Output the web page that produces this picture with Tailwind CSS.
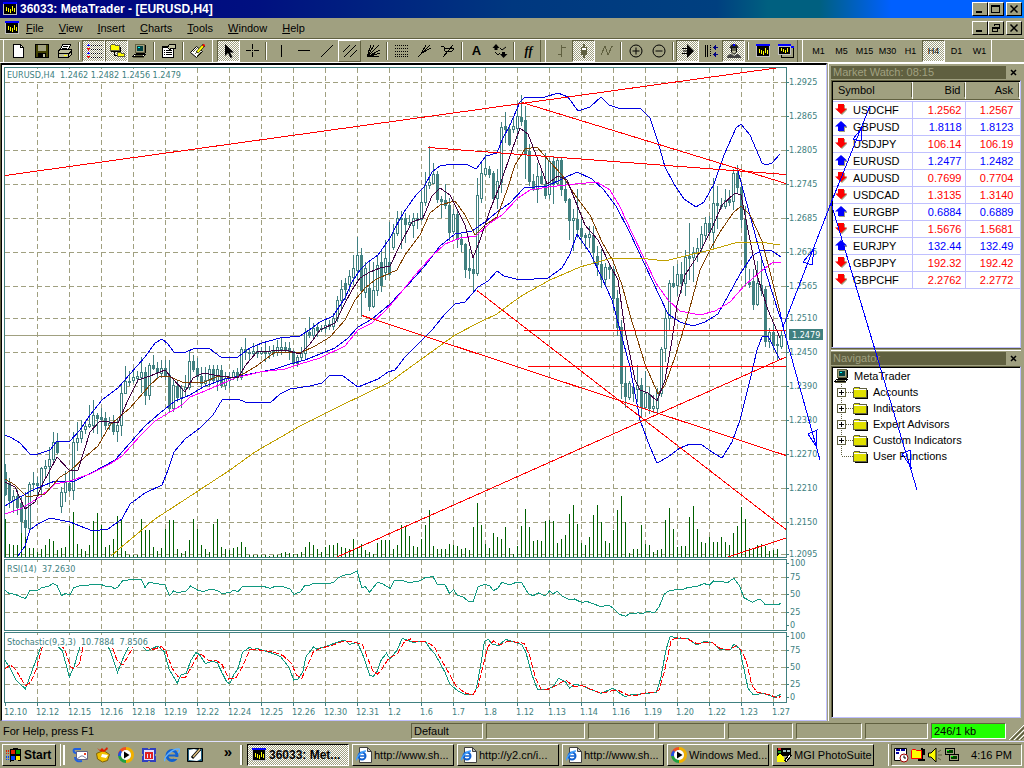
<!DOCTYPE html>
<html lang="en">

<head>
    <meta charset="UTF-8" />
    <meta name="viewport" content="width=device-width, initial-scale=1.0" />
    <title>36033: MetaTrader - [EURUSD,H4]</title>
    <script src="https://cdn.jsdelivr.net/npm/@tailwindcss/browser@4"></script>
</head>

<body class="relative flex h-screen flex-col overflow-hidden bg-[#a0a080] font-['Liberation_Sans',Arial,sans-serif] text-[11px] leading-[14px] text-black select-none">

    <!-- Shared symbols -->
    <svg class="hidden">
        <symbol id="app" viewBox="0 0 16 16" shape-rendering="crispEdges">
            <path fill="#000" d="M1 2h14v12H1z" />
            <path fill="#00f" d="M1 1h14v2H1z" />
            <path fill="none" stroke="#c0c0c0" d="M1.500 3v10.500h13V3" />
            <path fill="#ff0" d="M4 6h1v4H4zM6 7h1v4H6zM8 8h1v4H8zM10 5h1v5h-1zM12 7h1v4h-1z" />
        </symbol>
        <symbol id="folder" viewBox="0 0 16 16" shape-rendering="crispEdges">
            <path fill="#000" d="M3 14h12V6h1v9H3z" />
            <path fill="#e0e000" stroke="#606040" d="M1.500 13.500v-9l1-1.500h4l1.500 1.500h6.500v9z" />
            <path stroke="#fff" d="M2 5.500h12" />
        </symbol>
        <symbol id="pc" viewBox="0 0 16 16" shape-rendering="crispEdges">
            <path fill="#a0a080" stroke="#606040" d="M3.500 1.500h9v8h-9z" />
            <path fill="#004040" d="M5 3h6v5H5z" />
            <path fill="#0ff" d="M6 4h2v1H6z" />
            <path fill="#000" d="M13 2h1v8h-1zM4 10h9v1H4z" />
            <path fill="#fff" stroke="#000" d="M2.500 11.500h11l-2 2h-11z" />
            <path stroke="#606040" d="M3 12.500h8M1 14.500h11" />
        </symbol>
        <symbol id="ie" viewBox="0 0 16 16">
            <circle cx="8" cy="8.500" r="5" fill="none" stroke="#1060d0" stroke-width="3" />
            <path d="M4 8.500h9" stroke="#1060d0" stroke-width="2" />
            <path d="M10 10h5v2h-5z" fill="#a0a080" />
            <path d="M1 14C-1 11 8 1 15 2c1 1 0 3-1 4" fill="none" stroke="#60b0ff" stroke-width="1.500" />
        </symbol>
        <symbol id="iepage" viewBox="0 0 16 16">
            <path fill="#fff" stroke="#404040" d="M3.500.5h8l4 4v11h-12z" />
            <path fill="#c0c0c0" stroke="#404040" d="M11.500.5v4h4z" />
            <circle cx="6" cy="9" r="3.500" fill="none" stroke="#1060d0" stroke-width="2" />
            <path d="M3 9h7" stroke="#1060d0" stroke-width="1.500" />
            <path d="M1 13c-2-1 4-9 9-9" fill="none" stroke="#40a0ff" stroke-width="1.500" />
        </symbol>
        <symbol id="wmp" viewBox="0 0 16 16">
            <path d="M8 1.500A6.500 6.500 0 0 1 14.500 8" fill="none" stroke="#f0b000" stroke-width="3" />
            <path d="M14.500 8A6.500 6.500 0 0 1 8 14.500" fill="none" stroke="#f0b000" stroke-width="3" />
            <path d="M8 14.500A6.500 6.500 0 0 1 1.500 8" fill="none" stroke="#20a040" stroke-width="3" />
            <path d="M1.500 8A6.500 6.500 0 0 1 8 1.500" fill="none" stroke="#f05020" stroke-width="3" />
            <path d="M1.500 9c0-2 1-4 2-4.500" fill="none" stroke="#2050e0" stroke-width="3" />
            <circle cx="8" cy="8" r="5" fill="#fff" />
            <path d="M6 4.500v7L11.500 8z" fill="#000" />
        </symbol>
    </svg>

    <!-- Title bar -->
    <header class="flex h-[18px] shrink-0 items-center bg-[linear-gradient(90deg,#000080_0%,#001080_25%,#003880_50%,#004080_70%,#006080_75%,#006080_80%,#0060ff_87%,#0060ff_98%,#0080ff_100%)] pr-[2px] pl-[2px] text-white">
        <svg class="mr-[2px] h-4 w-4"><use href="#app" /></svg>
        <h1 class="flex-1 text-[12px] font-bold">36033: MetaTrader - [EURUSD,H4]</h1>
        <div class="flex [&>button]:h-[14px] [&>button]:w-4 [&>button]:border [&>button]:border-t-white [&>button]:border-r-black [&>button]:border-b-black [&>button]:border-l-white [&>button]:bg-[#a0a080]">
            <button aria-label="Minimize"><svg viewBox="0 0 14 12" shape-rendering="crispEdges"><path fill="#000" d="M3 8h6v2H3z" /></svg></button>
            <button aria-label="Maximize"><svg viewBox="0 0 14 12" shape-rendering="crispEdges"><path d="M2 2h9v8H2zM3 4v5h7V4z" fill="#000" fill-rule="evenodd" /></svg></button>
            <button aria-label="Close" class="ml-[2px]"><svg viewBox="0 0 14 12"><path d="M3.500 2.500l7 7M10.500 2.500l-7 7" stroke="#000" stroke-width="1.500" /></svg></button>
        </div>
    </header>

    <!-- Menu -->
    <nav class="flex h-[21px] shrink-0 items-center border-b border-[#606040] pr-[2px] pl-1">
        <svg class="mr-[6px] h-4 w-4"><use href="#app" /></svg>
        <div class="flex flex-1 gap-[15px]">
            <button><u>F</u>ile</button>
            <button><u>V</u>iew</button>
            <button><u>I</u>nsert</button>
            <button><u>C</u>harts</button>
            <button><u>T</u>ools</button>
            <button><u>W</u>indow</button>
            <button><u>H</u>elp</button>
        </div>
        <div class="flex [&>button]:h-[14px] [&>button]:w-4 [&>button]:border [&>button]:border-t-white [&>button]:border-r-black [&>button]:border-b-black [&>button]:border-l-white [&>button]:bg-[#a0a080]">
            <button aria-label="Minimize chart"><svg viewBox="0 0 14 12" shape-rendering="crispEdges"><path fill="#000" d="M3 8h6v2H3z" /></svg></button>
            <button aria-label="Restore chart"><svg viewBox="0 0 14 12" shape-rendering="crispEdges"><path fill="none" stroke="#000" d="M5.500 4V2.500h5v4H9M5 2h6M3.500 5.500h5v4h-5zM3 5h6v1H3z" /></svg></button>
            <button aria-label="Close chart" class="ml-[2px]"><svg viewBox="0 0 14 12"><path d="M3.500 2.500l7 7M10.500 2.500l-7 7" stroke="#000" stroke-width="1.500" /></svg></button>
        </div>
    </nav>

    <!-- Toolbars -->
    <div class="flex h-6 shrink-0 border-t border-b border-t-white border-b-white pl-[3px] [&_button]:grid [&_button]:h-[22px] [&_button]:w-[23px] [&_button]:place-items-center [&_i]:mx-[2px] [&_i]:h-[18px] [&_i]:w-[2px] [&_i]:border-l [&_i]:border-[#606040] [&_i]:bg-white [&_svg]:h-4 [&_svg]:w-4">
        <div class="flex items-center border-l border-white pl-[3px]">
            <button aria-label="New"><svg viewBox="0 0 16 16" shape-rendering="crispEdges"><path fill="#fff" stroke="#000" d="M2.500 1.500h7l3 3v10h-10z" /><path fill="none" stroke="#000" d="M9.500 1v3.500h3" /></svg></button>
            <button aria-label="Save"><svg viewBox="0 0 16 16" shape-rendering="crispEdges"><path fill="#404000" stroke="#000" d="M1.500 1.500h13v13h-13z" /><path fill="#a0a080" d="M4 2h8v6H4z" /><path fill="#000" d="M4 10h8v4H4z" /><path fill="#c0c0a0" d="M9 11h2v3H9z" /></svg></button>
            <button aria-label="Print"><svg viewBox="0 0 16 16" shape-rendering="crispEdges"><path fill="#fff" stroke="#000" d="M5.500 1.500h8l-2 5h-8z" /><path stroke="#000" d="M6 3.500h5M5 5.500h5" /><path fill="#c0c0a0" stroke="#000" d="M1.500 7.500l2-1h11v5l-3 3h-10z" /><path fill="none" stroke="#000" d="M1 10.500h11M11.500 10v4M12 10.500l3-3" /><path stroke="#ff0" d="M7 12.500h3" /></svg></button>
            <i></i>
            <button aria-label="Market Watch" aria-pressed="true" class="border border-t-[#606040] border-r-white border-b-white border-l-[#606040] bg-[repeating-conic-gradient(#fff_0_25%,#a0a080_0_50%)] bg-[length:2px_2px]"><svg viewBox="0 0 16 16" shape-rendering="crispEdges"><path stroke="#000" stroke-dasharray="1 1" d="M5 2.500h11M5 6.500h11M5 10.500h11M5 14.500h11" /><path fill="#00f" d="M2 1h1v1h1v1H1V2h1zM2 9h1v1h1v1H1v-1h1z" /><path fill="red" d="M1 5h3v1H3v2H2V6H1zM1 13h3v1H3v1H2v-1H1z" /></svg></button>
            <button aria-label="Navigator" aria-pressed="true" class="border border-t-[#606040] border-r-white border-b-white border-l-[#606040] bg-[repeating-conic-gradient(#fff_0_25%,#a0a080_0_50%)] bg-[length:2px_2px]"><svg viewBox="0 0 16 16" shape-rendering="crispEdges"><path fill="#ff0" stroke="#606040" d="M1.500 7.500v-5l1-1h3l1 1h4v5z" /><path fill="none" stroke="#000" d="M2 8.500h9.500V4M5.500 9v3.500H8" /><path fill="#ff0" stroke="#606040" d="M8.500 13.500v-4h3l1 1h3v3z" /></svg></button>
            <button aria-label="Terminal"><svg><use href="#pc" /></svg></button>
            <i></i>
            <button aria-label="Properties"><svg viewBox="0 0 16 16" shape-rendering="crispEdges"><path fill="#fff" stroke="#000" d="M1.500 3.500h11v11h-11z" /><path stroke="#000" d="M3 7.500h1M5 7.500h6M3 9.500h1M5 9.500h6M3 11.500h1M5 11.500h6M1 4.500h11" /><path fill="#c0c0a0" stroke="#000" d="M6.500 4.500l2-3h6v4h-4l-2 1z" /></svg></button>
            <i></i>
            <button aria-label="Edit"><svg viewBox="0 0 16 16"><path fill="#fff" stroke="#000" d="M.5 9.500l6-6 6 5-6 6z" /><path stroke="#606040" d="M3 9l4-4M5 11l4-4M7 13l4-4" /><path stroke="#000" stroke-width="3" d="M7 9.500L14 2" /><path stroke="#ff0" stroke-width="2" d="M7.500 9l5.500-6" /><path stroke="red" stroke-width="2" d="M13 3l1.500-1.500" /></svg></button>
        </div>
        <div class="ml-[3px] flex items-center border-r border-l border-r-[#606040] border-l-white pl-[4px]">
            <button aria-label="Cursor" aria-pressed="true" class="border border-t-[#606040] border-r-white border-b-white border-l-[#606040] bg-[repeating-conic-gradient(#fff_0_25%,#a0a080_0_50%)] bg-[length:2px_2px]"><svg viewBox="0 0 16 16"><path fill="#000" d="M4 1v12l3-3 2.500 5 2-1L9 9.500h4z" /></svg></button>
            <button aria-label="Crosshair"><svg viewBox="0 0 16 16" shape-rendering="crispEdges"><path stroke="#000" d="M8.500 1v5M8.500 9v5M2 7.500h5M10 7.500h5M8 7.500h1" /></svg></button>
            <i></i>
            <button aria-label="Vertical line"><svg viewBox="0 0 16 16" shape-rendering="crispEdges"><path stroke="#000" d="M8.500 2v12" /></svg></button>
            <button aria-label="Horizontal line"><svg viewBox="0 0 16 16" shape-rendering="crispEdges"><path stroke="#000" d="M2 7.500h12" /></svg></button>
            <button aria-label="Trendline"><svg viewBox="0 0 16 16" shape-rendering="crispEdges"><path stroke="#000" d="M2 14L14 2" /></svg></button>
            <button aria-label="Channel" class="border border-t-white border-r-[#606040] border-b-[#606040] border-l-white"><svg viewBox="0 0 16 16" shape-rendering="crispEdges"><path stroke="#000" d="M1 9l7-7M2 14L14 2M8 14l7-7" /></svg></button>
            <button aria-label="Gann fan"><svg viewBox="0 0 16 16" shape-rendering="crispEdges"><path stroke="#000" d="M2 14L6 2M2 14l7-12M2 14L14 2M2 14l13-7M2 14l13-4M2 13.500h12M3 13V7" /></svg></button>
            <i></i>
            <button aria-label="Fibonacci retracement"><svg viewBox="0 0 16 16" shape-rendering="crispEdges"><path stroke="#000" stroke-dasharray="1 1" d="M1 2.500h14M1 5.500h14M1 8.500h14M1 11.500h14M1 13.500h14" /></svg></button>
            <button aria-label="Fibonacci fan"><svg viewBox="0 0 16 16" shape-rendering="crispEdges"><path stroke="#000" d="M1 14L13 2M4 11L9 2M5 10l9-5" /></svg></button>
            <button aria-label="Pitchfork"><svg viewBox="0 0 16 16" shape-rendering="crispEdges"><path fill="none" stroke="#000" d="M3 14L13 2M1 3h2l3 3 8-1M4 4l1 4 6 1 3-3" /></svg></button>
            <i></i>
            <button aria-label="Text" class="text-[13px] font-bold">A</button>
            <button aria-label="Arrows"><svg viewBox="0 0 16 16"><path fill="#000" d="M4 1l3.500 4H5.500v2h-3V5H.5zM10 9h3v2h2.500L11.500 15 8 11h2z" /><path fill="none" stroke="#000" d="M8 5l2 2 4-3M3 9l3 3 2-2" /></svg></button>
            <i></i>
            <button aria-label="Indicators" class="font-['Liberation_Serif',serif] text-[12px] font-bold italic">ff</button>
        </div>
        <div class="ml-[4px] flex items-center border-r border-l border-r-[#606040] border-l-white pl-[3px]">
            <button aria-label="Bar chart"><svg viewBox="0 0 16 16" shape-rendering="crispEdges"><path stroke="#606040" d="M8.500 2v12M9 4.500h4M5 11.500h3" /></svg></button>
            <button aria-label="Candlesticks" aria-pressed="true" class="border border-t-[#606040] border-r-white border-b-white border-l-[#606040] bg-[repeating-conic-gradient(#fff_0_25%,#a0a080_0_50%)] bg-[length:2px_2px]"><svg viewBox="0 0 16 16" shape-rendering="crispEdges"><path stroke="#606040" stroke-width="2" d="M8 1v14" /><path fill="#606040" d="M5 4h6v8H5z" /><path fill="#fff" d="M6 5h4v2H6z" /></svg></button>
            <button aria-label="Line chart"><svg viewBox="0 0 16 16" shape-rendering="crispEdges"><path fill="none" stroke="#606040" d="M2 12l4-9 3 9 4-9h1" /></svg></button>
            <i></i>
            <button aria-label="Zoom in"><svg viewBox="0 0 16 16"><circle cx="8" cy="8" r="6" fill="none" stroke="#000" /><path stroke="#000" d="M4.500 8h7M8 4.500v7" /></svg></button>
            <button aria-label="Zoom out"><svg viewBox="0 0 16 16"><circle cx="8" cy="8" r="6" fill="none" stroke="#000" /><path stroke="#000" d="M4.500 8h7" /></svg></button>
            <i></i>
            <button aria-label="Auto scroll" aria-pressed="true" class="border border-t-[#606040] border-r-white border-b-white border-l-[#606040] bg-[repeating-conic-gradient(#fff_0_25%,#a0a080_0_50%)] bg-[length:2px_2px]"><svg viewBox="0 0 16 16"><path fill="#000" d="M7 1l7 7-7 7z" /><path stroke="#000" d="M2 5.500h7M3 8h6M2 10.500h7" /></svg></button>
            <button aria-label="Chart shift"><svg viewBox="0 0 16 16" shape-rendering="crispEdges"><path stroke="#000" d="M2.500 2v12M4.500 2v12" /><path stroke="#000" stroke-dasharray="1 1" d="M7.500 2v12" /><path stroke="#000080" d="M10 4.500h5M10 11.500h5M11.500 3v3M11.500 10v3M12.500 2v5M12.500 9v5" /></svg></button>
            <button aria-label="Expert Advisors" aria-pressed="true" class="border border-t-[#606040] border-r-white border-b-white border-l-[#606040] bg-[repeating-conic-gradient(#fff_0_25%,#a0a080_0_50%)] bg-[length:2px_2px]"><svg viewBox="0 0 16 16"><path fill="#202020" d="M4 4c0-4 8-4 8 0l1 1H3z" /><path fill="#c0c0a0" stroke="#000" d="M5.500 5h5v4l-2 2h-1l-2-2z" /><path stroke="#000" d="M6 7h4" /><path fill="#404040" d="M1 15c0-3 3-4 4-4l3 2 3-2c1 0 4 1 4 4z" /><path fill="#00f" d="M7 1h2v2H7z" /></svg></button>
            <i></i>
            <button aria-label="Chart window"><svg><use href="#app" /></svg></button>
            <button aria-label="All charts"><svg viewBox="0 0 16 16" shape-rendering="crispEdges"><path fill="#a0a080" stroke="#000" d="M3.500 4.500h12v10h-12z" /><path fill="#00f" d="M13 3h3v2h-3zM0 1h13v2H0z" /><path fill="#000" stroke="#c0c0c0" d="M.5 3.500h12v8H.5z" /><path fill="#ff0" d="M3 5h1v3H3zM5 6h1v3H5zM7 7h1v3H7zM9 5h1v4H9z" /></svg></button>
        </div>
        <div class="ml-[4px] flex items-center border-r border-l border-white pl-[4px] [&>button]:text-[9px]">
            <button>M1</button>
            <button>M5</button>
            <button>M15</button>
            <button>M30</button>
            <button>H1</button>
            <button aria-pressed="true" class="border border-t-[#606040] border-r-white border-b-white border-l-[#606040] bg-[repeating-conic-gradient(#fff_0_25%,#a0a080_0_50%)] bg-[length:2px_2px]">H4</button>
            <button>D1</button>
            <button>W1</button>
        </div>
    </div>

    <main class="flex min-h-0 flex-1">
        <!-- Chart window -->
        <section class="min-w-0 flex-1 border-l border-[#606040] pr-px">
            <div class="h-full border-t-2 border-r border-b border-l border-t-black border-r-[#c0c0ff] border-b-[#c0c0ff] border-l-black bg-white">
                <svg id="chart" class="block h-full w-full font-['DejaVu_Sans_Condensed','DejaVu_Sans',sans-serif] text-[9px]" viewBox="2 65 824 655" preserveAspectRatio="xMinYMin meet">
                    <g id="grid" stroke="#a0a080" stroke-dasharray="5 3" shape-rendering="crispEdges"></g>
                    <path stroke="#a0a080" d="M5 335.500h781" shape-rendering="crispEdges" />
                    <g id="volumes" fill="#006000" shape-rendering="crispEdges"></g>
                    <g id="candles" stroke="#408080" shape-rendering="crispEdges"></g>
                    <g fill="none" shape-rendering="crispEdges">
                        <!-- bands -->
                        <g stroke="#0000e0">
                            <polyline points="5,435 12,438 20,443 30,454 38,454 50,450 57,441 70,441 80,430 90,415 102,400 118,388 130,374 145,357 155,343 162,339 168,344 174,352 186,352 195,348 210,349 222,358 238,357 250,348 262,343 280,338 300,336 312,328 320,322 333,316 341,304 345,298 352,282 360,270 368,262 378,255 385,245 390,238 395,228 404,212 416,195 424,187 432,172 440,166 452,164 466,164 476,169 486,156 497,153 502,140 510,125 520,102 525,97 545,97 558,93 568,97 578,111 590,107 601,97 609,105 618,108 640,108 650,118 658,142 665,167 674,184 684,199 696,207 704,202 714,184 724,155 736,128 741,124 750,135 762,163 766,165 772,163 780,154" />
                            <polyline points="5,506 20,497 35,489 55,481 75,481 95,471 115,460 130,443 145,426 160,413 175,401 190,395 205,386 225,379 240,376 260,372 275,369 290,364 305,360 320,354 335,348 347,339 358,327 372,319 390,304 405,288 424,267 440,246 455,234 472,231 485,222 497,212 510,203 524,188 547,186 562,179 577,172 592,179 604,190 616,206 630,233 645,265 660,297 668,314 680,322 693,326 705,322 718,314 728,296 740,274 752,256 762,250 772,251 781,257" />
                            <polyline points="18,556 25,546 30,530 38,524 50,518 70,522 85,528 93,531 108,529 122,519 130,504 145,493 162,485 168,470 174,452 185,439 200,428 213,415 222,400 238,399 245,402 270,403 280,394 290,389 310,386 322,383 330,375 342,375 358,387 378,379 388,372 395,370 405,357 420,342 432,330 445,314 455,304 465,302 478,287 488,281 497,271 504,276 520,280 548,278 562,268 570,254 577,234 590,253 602,278 612,300 620,330 630,367 640,420 650,447 657,463 668,457 680,448 690,444 702,445 715,454 722,458 732,442 740,420 750,380 757,350 762,337 768,336 775,350 780,360" />
                            <polyline points="738,171 762,260 779,314 784,327" />
                        </g>
                        <!-- moving averages -->
                        <polyline stroke="#f0f" points="5,514 20,509 40,497 55,484 70,481 90,474 110,464 122,456 140,436 155,421 170,412 182,405 190,397 205,391 235,378 260,372 285,369 300,364 320,358 345,346 358,330 372,323 385,311 395,300 415,275 432,256 445,244 460,238 476,236 490,223 502,215 518,198 530,190 548,187 575,184 597,182 610,190 620,207 632,233 644,258 656,283 668,300 680,311 700,315 715,311 730,302 745,285 760,272 772,263 781,262" />
                        <polyline stroke="#804000" points="5,479 15,485 27,497 45,494 60,477 70,471 85,457 98,446 110,425 130,408 150,385 160,376 168,376 182,382 205,382 218,376 235,378 245,373 258,365 275,352 300,353 315,346 330,337 345,320 355,300 365,288 375,280 390,273 397,270 405,255 420,235 430,213 440,205 455,201 465,215 475,235 485,225 497,217 507,190 515,165 525,149 537,147 550,162 562,175 575,195 590,215 602,242 613,261 622,285 630,315 645,364 658,394 665,385 675,357 685,325 692,300 700,270 710,250 720,232 733,213 741,206 750,215 762,241 772,280 780,312" />
                        <polyline stroke="#400040" points="5,482 15,487 25,509 35,502 42,485 57,457 70,471 78,470 90,432 100,421 118,423 128,400 138,380 150,376 165,370 172,378 185,392 193,378 203,373 220,376 238,378 245,366 257,352 285,350 300,354 310,344 320,330 335,323 345,303 352,290 360,278 370,272 380,268 390,266 400,245 412,222 423,218 432,196 440,188 450,195 465,225 473,258 480,240 490,210 500,185 512,150 520,128 528,134 538,160 547,184 558,176 567,180 577,205 585,225 598,240 610,265 618,280 625,330 635,380 640,390 648,393 657,401 665,380 672,340 677,305 685,275 700,252 712,228 722,205 735,193 741,195 748,230 757,275 768,310 780,338" />
                        <polyline stroke="#c0a000" points="111,556 125,544 155,519 195,493 230,470 255,452 300,426 340,406 390,382 405,371 430,353 455,335 480,322 497,314 510,304 523,295 550,280 580,267 612,258 640,258 665,261 685,256 710,250 735,243 760,242 780,245" />
                        <!-- trend lines -->
                        <path stroke="red" d="M5 175.500L776 68M522 102.500L786 183.500M428 147.500L786 174.500M524 330.500h262M528 366.500h258M362 315.500L786 455.500M477 290.500L786 529.500M337 557L786 357M728 557l58-19" />
                        <!-- RSI and stochastic -->
                        <g transform="translate(0 555) scale(0.5294 0.3333)" stroke="#109880">
                            <polyline vector-effect="non-scaling-stroke" points="9,106 17,115 28,118 48,131 57,106 70,107 80,97 90,95 100,86 108,92 116,122 124,115 132,120 139,98 150,93 175,89 190,88 202,95 212,96 216,101 222,97 231,78 250,73 267,73 274,98 281,82 300,87 312,90 320,122 328,108 336,113 352,108 360,93 374,106 384,110 397,103 410,106 420,116 435,112 440,106 450,110 458,94 485,96 497,94 510,100 520,94 534,95 548,102 555,118 568,110 576,90 584,92 592,85 605,87 625,84 632,80 640,67 655,58 660,60 675,48 683,98 690,95 698,112 713,82 722,86 737,100 745,77 757,75 770,82 790,80 803,68 818,65 826,88 841,90 849,115 857,103 863,120 875,126 885,139 894,139 903,96 915,88 925,92 932,107 940,100 948,82 963,90 975,82 985,82 998,116 1007,122 1017,114 1030,123 1038,108 1045,116 1053,109 1062,123 1075,134 1085,132 1098,142 1110,140 1135,155 1150,150 1160,162 1170,178 1182,184 1190,175 1200,177 1205,173 1212,177 1222,170 1237,172 1245,155 1255,117 1265,106 1290,103 1300,97 1315,95 1330,86 1340,90 1348,78 1375,82 1386,70 1397,92 1405,128 1422,142 1432,133 1438,135 1446,150 1470,150 1475,144" />
                            <polyline vector-effect="non-scaling-stroke" points="9,315 20,342 30,375 48,402 60,350 75,285 80,268 105,268 118,288 131,366 140,335 148,290 153,268 200,268 208,285 222,352 235,300 243,275 250,262 270,276 278,288 298,273 310,290 320,345 335,384 342,360 352,355 360,318 370,293 376,298 388,325 400,320 410,322 420,355 428,380 434,387 442,358 450,340 458,292 472,276 478,284 485,280 500,288 515,295 530,305 545,335 555,375 563,372 572,350 578,305 592,276 598,282 615,275 640,260 652,255 660,268 675,262 688,310 698,360 705,365 712,350 720,315 730,295 737,312 750,285 760,250 780,262 803,258 812,280 822,298 840,350 850,388 865,408 880,420 893,420 900,400 908,330 915,260 922,252 930,268 942,272 955,253 968,260 985,268 993,290 1005,360 1015,402 1030,405 1045,395 1055,370 1068,380 1076,400 1085,388 1100,392 1110,400 1135,415 1158,400 1180,425 1190,420 1240,412 1248,370 1258,285 1266,243 1280,250 1300,250 1315,270 1330,260 1345,262 1360,284 1380,284 1386,268 1397,280 1405,340 1413,400 1423,420 1440,415 1455,422 1462,428 1475,418" />
                            <polyline vector-effect="non-scaling-stroke" stroke="red" stroke-dasharray="6 2" points="9,342 20,330 30,345 48,392 58,382 68,345 78,285 82,268 115,268 124,290 133,335 140,342 150,325 158,268 210,268 222,320 232,330 243,300 255,265 275,276 290,283 305,275 314,290 325,340 337,366 350,368 362,335 374,300 382,300 395,318 410,318 420,330 432,372 445,370 458,335 472,284 490,285 515,290 535,302 550,325 560,360 570,370 580,335 592,290 605,280 625,272 650,258 670,262 685,270 692,300 705,350 713,358 720,345 735,308 750,298 765,258 775,252 780,260 805,260 820,275 832,310 850,360 862,395 880,415 893,420 903,395 915,315 922,275 932,258 945,270 960,258 990,265 1000,300 1012,370 1022,402 1032,405 1050,392 1068,375 1085,395 1100,392 1115,402 1135,415 1150,410 1160,405 1170,408 1185,420 1200,422 1220,413 1235,413 1245,405 1255,350 1268,255 1282,248 1300,253 1315,265 1345,262 1360,280 1375,285 1392,272 1400,285 1410,320 1420,390 1430,412 1450,418 1468,428 1475,425" />
                        </g>
                        <!-- frames -->
                        <path stroke="#408080" d="M4.500 67.500h782v490H4.500zM4.500 559.500h782v71H4.500zM4.500 632.500h782v70H4.500z" />
                    </g>
                    <path fill="#fff" d="M6 69h184v12H6zM6 562h74v12H6zM6 635h143v12H6z" />
                    <g id="labels" fill="#408080">
                        <text x="7" y="78" xml:space="preserve">EURUSD,H4  1.2462 1.2482 1.2456 1.2479</text>
                        <text x="7" y="572" xml:space="preserve">RSI(14)  37.2630</text>
                        <text x="7" y="645" xml:space="preserve">Stochastic(9,3,3)  10.7884  7.8506</text>
                        <path d="M789 329h34v11h-34z" />
                        <text x="792" y="338" fill="#fff">1.2479</text>
                    </g>
                </svg>
            </div>
        </section>

        <aside class="flex w-[196px] shrink-0 flex-col border-t border-l border-white pr-[3px] pl-[2px]">
            <!-- Market Watch -->
            <section class="flex h-[284px] shrink-0 flex-col pt-px">
                <div class="flex h-[14px] items-center">
                    <h2 class="h-[13px] flex-1 bg-[#606040] pl-[2px] leading-[13px] text-[#a0a080]">Market Watch: 08:15</h2>
                    <button aria-label="Close Market Watch" class="grid w-[15px] place-items-center"><svg class="h-[7px] w-[7px]" viewBox="0 0 7 7"><path d="M1 1l5 5M6 1L1 6" stroke="#000" stroke-width="1.500" /></svg></button>
                </div>
                <div class="mt-px flex-1 border border-t-[#606040] border-r-[#c0c0ff] border-b-[#c0c0ff] border-l-[#606040]">
                    <div class="h-full border-t border-l border-black bg-white">
                        <table class="w-full table-fixed">
                            <colgroup><col class="w-[79px]" /><col class="w-[53px]" /><col /></colgroup>
                            <thead>
                                <tr class="h-[17px] bg-[#a0a080] [&>th]:border-r [&>th]:border-b [&>th]:border-r-white [&>th]:border-b-[#606040] [&>th]:p-0 [&>th]:font-normal">
                                    <th><div class="border-r border-[#606040] pl-[5px] text-left">Symbol</div></th>
                                    <th><div class="border-r border-[#606040] pr-[3px] text-right">Bid</div></th>
                                    <th><div class="border-r border-[#606040] pr-[5px] text-right">Ask</div></th>
                                </tr>
                                <tr class="h-[2px] border-b border-[#c0c0ff]"><td colspan="3" class="p-0"></td></tr>
                            </thead>
                            <tbody id="quotes"></tbody>
                        </table>
                    </div>
                </div>
            </section>

            <!-- Navigator -->
            <section class="flex flex-1 flex-col border-t border-[#606040] pb-[3px]">
                <div class="mt-px flex h-[15px] items-center border-t border-white pt-px">
                    <h2 class="h-[13px] flex-1 bg-[#606040] pl-[2px] leading-[13px] text-[#a0a080]">Navigator</h2>
                    <button aria-label="Close Navigator" class="grid w-[15px] place-items-center"><svg class="h-[7px] w-[7px]" viewBox="0 0 7 7"><path d="M1 1l5 5M6 1L1 6" stroke="#000" stroke-width="1.500" /></svg></button>
                </div>
                <div class="mt-px flex-1 border border-t-[#606040] border-r-[#c0c0ff] border-b-[#c0c0ff] border-l-[#606040]">
                    <div class="h-full border-t border-l border-black bg-white">
                        <div class="flex h-4 items-center gap-1 pl-px"><svg class="h-4 w-4"><use href="#pc" /></svg>MetaTrader</div>
                        <ul id="tree"></ul>
                    </div>
                </div>
            </section>
        </aside>
    </main>

    <!-- Status bar -->
    <footer class="flex h-5 shrink-0 items-center gap-[3px] pl-[3px] [&>div]:h-4 [&>div]:border [&>div]:border-t-[#606040] [&>div]:border-r-white [&>div]:border-b-white [&>div]:border-l-[#606040]">
        <p class="flex-1">For Help, press F1</p>
        <div class="w-[72px] pl-[2px]">Default</div>
        <div class="w-[99px]"></div>
        <div class="w-[67px]"></div>
        <div class="w-[67px]"></div>
        <div class="w-[65px]"></div>
        <div class="w-[66px]"></div>
        <div class="w-[63px]"></div>
        <div class="w-[75px] bg-[#20ff00] pl-[2px]">246/1 kb</div>
        <svg class="h-4 w-[15px] self-end" viewBox="0 0 15 16"><path d="M0 15L15 0M5 15L15 5M10 15l5-5" stroke="#fff" /><path d="M2 15L15 2M3 15L15 3M7 15l8-8M8 15l7-7M12 15l3-3" stroke="#606040" /></svg>
    </footer>

    <!-- Taskbar -->
    <div class="flex h-[27px] shrink-0 items-center border-t border-[#e0e0ff] pr-[2px] pl-[2px]">
        <button class="flex h-[22px] w-[54px] items-center gap-[2px] border border-t-white border-r-black border-b-black border-l-white pl-[2px] text-[12px] font-bold">
            <svg class="h-4 w-[17px]" viewBox="0 0 17 16" shape-rendering="crispEdges"><path fill="#000" d="M5 2l5-1 6 1v12l-6-1-5 2z" /><path fill="#e02000" d="M6 3h4v4H6zM1 3h1v2H1zM3 3h1v2H3zM1 6h1v1H1zM3 6h1v1H3z" /><path fill="#00a000" d="M11 3h4v4h-4z" /><path fill="#0040ff" d="M6 9h4v4H6zM1 9h1v2H1zM3 9h1v2H3zM1 12h1v1H1zM3 12h1v1H3z" /><path fill="#ffe000" d="M11 9h4v4h-4z" /></svg>
            Start
        </button>
        <div class="ml-[4px] h-[22px] w-px bg-white"></div>
        <div class="ml-[2px] flex h-5 flex-1 items-center gap-[7px] border-l-2 border-white pl-[7px] [&>button>svg]:h-4 [&>button>svg]:w-4">
            <button aria-label="Outlook Express"><svg viewBox="0 0 16 16"><path fill="#fff" stroke="#606080" d="M4.500 4.500h11v8h-11z" /><path fill="none" stroke="#8080a0" d="M5 12l4-3h2l4 3" /><path fill="#f04020" d="M12 6h2v2h-2z" /><path fill="none" stroke="#2060e0" stroke-width="2" d="M9 2H3C1 2 1 6 4 6M3 10c0 4 3 5 7 4" /></svg></button>
            <button aria-label="Messenger"><svg viewBox="0 0 16 16"><path fill="#f0c000" stroke="#806000" d="M1.500 6.500l7-3 6 4-2 6-5 1.500-5-3z" /><path fill="#fff" d="M7 7l6 1-2 3-5-1z" /><path fill="#e02000" d="M2 1l3 2 2-2 2 2 3-3 1 2-4 3-4-1z" /></svg></button>
            <button aria-label="Media Player"><svg><use href="#wmp" /></svg></button>
            <button aria-label="Photo viewer"><svg viewBox="0 0 16 16" shape-rendering="crispEdges"><path fill="#3040c0" d="M1 1h14v14H1z" /><path fill="#e0e0ff" d="M3 3h10v10H3z" /><path fill="#e02020" d="M4 5h8v7H4z" /><path stroke="#e0e0ff" d="M6.500 7v4M9.500 7v4" /><path fill="#a0a080" d="M0 7h2v2H0zM14 7h2v2h-2zM7 0h2v2H7zM7 14h2v2H7z" /></svg></button>
            <button aria-label="Internet Explorer"><svg><use href="#ie" /></svg></button>
            <button aria-label="Show Desktop"><svg viewBox="0 0 16 16"><path fill="#206080" stroke="#000" d="M.5 1.500h15v13H.5z" /><path fill="#fff" d="M2 3l5-1 7 2v8l-4 2-8-1z" /><path stroke="#000" stroke-width="3" d="M5 11l8-9" /><path stroke="#e0c080" stroke-width="1.500" d="M6 10l7-8" /></svg></button>
            <button aria-label="More" class="ml-auto pr-2 pb-2 text-[15px] leading-none font-bold">»</button>
        </div>
        <div class="mr-[4px] h-5 w-[3px] border-r border-l-2 border-r-[#606040] border-l-white"></div>
        <div class="flex gap-[3px] [&>button]:flex [&>button]:h-[22px] [&>button]:w-[102px] [&>button]:items-center [&>button]:gap-[2px] [&>button]:border [&>button]:pl-[3px] [&>button]:whitespace-nowrap [&_svg]:h-4 [&_svg]:w-4 [&_svg]:shrink-0">
            <button aria-pressed="true" class="border-t-black border-r-white border-b-white border-l-black bg-[repeating-conic-gradient(#fff_0_25%,#a0a080_0_50%)] bg-[length:2px_2px] text-[12px] font-bold"><svg><use href="#app" /></svg>36033: Met...</button>
            <button class="border-t-white border-r-black border-b-black border-l-white"><svg><use href="#iepage" /></svg>http://www.sh...</button>
            <button class="border-t-white border-r-black border-b-black border-l-white"><svg><use href="#iepage" /></svg>http://y2.cn/i...</button>
            <button class="border-t-white border-r-black border-b-black border-l-white"><svg><use href="#iepage" /></svg>http://www.sh...</button>
            <button class="border-t-white border-r-black border-b-black border-l-white"><svg><use href="#wmp" /></svg>Windows Med...</button>
            <button class="border-t-white border-r-black border-b-black border-l-white"><svg viewBox="0 0 16 16" shape-rendering="crispEdges"><path fill="#000" d="M1 1h14v8H1z" /><path fill="#e02020" d="M2 1h3v2H2z" /><path fill="#20a020" d="M2 4h3v2H2z" /><path fill="#a0c0c0" d="M7 3h3v2H7zM11 3h3v2h-3z" /><path fill="#ff0" d="M1 9l3-2 4 4 1 4H1z" /><path fill="#fff" stroke="#000" d="M8.500 13.500l5-6 2 1-5 6z" /></svg>MGI PhotoSuite</button>
        </div>
        <div class="mr-[2px] ml-[14px] h-[22px] w-px bg-white"></div>
        <div class="flex h-[22px] w-[131px] items-center gap-px border border-t-[#606040] border-r-white border-b-white border-l-[#606040] pr-[9px] pl-px [&>svg]:h-4 [&>svg]:w-4">
            <svg viewBox="0 0 16 16"><path fill="#fff" stroke="#000" d="M1.500 1.500h12v12h-12z" /><path stroke="#0000a0" stroke-width="2" d="M3 3h4M8 3h4M3 6h3" /><circle cx="11" cy="11" r="4" fill="#fff" stroke="#a00000" /><path fill="none" stroke="#000" d="M11 8.500V11h2" /></svg>
            <svg viewBox="0 0 16 16"><path fill="none" stroke="#000" stroke-width="2" d="M12 1v13M8 13h7M14 2v6" /><path fill="#ff0" stroke="red" d="M1.500 11.500v-8l1-1h3l1 1h5v8z" /></svg>
            <svg viewBox="0 0 16 16"><path fill="#ff0" stroke="#000" d="M1.500 6v4H4l5 5V1L4 6z" /><path stroke="#606040" d="M11 8h4M11 5l3-2M11 11l3 2" /></svg>
            <svg viewBox="0 0 16 16" shape-rendering="crispEdges"><path fill="#a0a080" stroke="#000" d="M1.500 1.500h9v6h-9zM5.500 7.500h9v6h-9z" /><path fill="#004000" d="M3 3h6v3H3zM7 9h6v3H7z" /><path stroke="#0f0" d="M3 3.500h2M7 9.500h2" /></svg>
            <time class="ml-auto">4:16 PM</time>
        </div>
    </div>

    <!-- Forecast arrows, drawn over chart and side panels -->
    <svg class="pointer-events-none absolute top-0 left-0 h-[768px] w-[1024px]" viewBox="0 0 1024 768" fill="none" stroke="#0000ff" shape-rendering="crispEdges">
        <path d="M783 327L831 203L870 106M783 327L820 460M780 312L783 327M831 203L917 490" />
        <path d="M814 249L803 262L812 265ZM862 128L853 139L861 141ZM816 446L808 434L817 430ZM911 467L902 454L910 450Z" />
    </svg>

    <script>
        // high, body top, body bottom, low, falling (1) or rising (0); one candle every 4px
        const candles = `464,472,494,496,1 478,483,500,508,1 490,496,500,513,0 490,496,507,515,1 497,503,521,533,1 492,520,527,537,1 482,484,528,533,0 472,483,484,492,0 477,483,485,496,1 467,468,485,497,0
460,466,468,477,0 447,459,466,487,0 432,442,459,463,0 433,442,452,454,1 487,492,506,513,0 471,482,492,502,0 470,483,490,492,1 432,442,490,500,0 422,438,442,451,0 420,431,438,443,0
423,426,429,434,0 405,424,426,428,0 400,415,425,433,0 413,415,418,434,1 408,417,419,437,1 412,418,425,430,1 417,423,425,430,0 415,423,431,435,1 418,425,431,442,0 385,393,425,436,0
366,381,393,394,0 371,381,382,386,0 370,377,380,383,0 371,376,378,383,0 357,372,377,393,0 367,372,395,405,1 363,365,395,400,0 355,365,368,370,1 362,368,372,379,1 360,368,373,378,0
360,368,376,380,1 360,375,408,412,1 378,385,408,412,0 380,386,397,402,1 385,388,397,408,0 375,387,389,397,0 350,361,387,390,0 355,361,369,372,1 358,368,376,380,1 367,376,383,387,1
367,380,383,387,0 365,369,380,387,0 365,369,380,383,1 365,369,380,391,0 365,370,385,388,1 372,378,385,390,0 372,377,380,388,0 370,372,377,380,0 368,372,377,381,1 347,349,377,380,0
338,349,352,360,1 348,352,353,360,0 343,351,353,357,0 345,351,353,358,1 347,351,353,355,0 343,351,353,362,1 346,351,353,359,0 345,350,353,357,1 340,347,352,356,0 337,347,349,355,0
342,347,350,353,1 342,348,352,360,1 350,351,363,365,1 355,357,363,367,0 347,353,357,361,0 328,332,353,359,0 317,332,335,338,1 323,328,335,338,0 324,327,330,337,1 325,328,329,332,0
320,325,328,333,0 320,324,326,330,0 313,318,326,330,0 296,300,318,322,0 280,289,300,310,0 278,283,289,300,1 270,276,284,292,0 255,268,277,285,0 237,255,270,280,0 248,255,290,317,1
262,268,292,298,0 260,288,306,311,1 262,290,306,308,0 255,265,290,296,0 250,262,285,292,1 240,258,272,280,0 222,262,274,276,1 224,233,247,250,0 211,218,233,236,0 211,218,219,249,0
213,218,224,243,1 215,222,224,228,0 213,218,225,238,0 213,218,220,229,1 191,202,219,221,0 172,185,202,206,0 146,182,185,189,0 163,174,183,184,0 171,174,199,203,1 196,199,201,218,1
184,200,205,209,1 198,205,232,241,1 209,214,231,234,0 209,214,239,248,1 234,239,244,252,1 243,244,269,278,1 249,268,270,279,1 258,269,273,291,1 178,195,273,276,0 163,173,198,203,0
154,168,174,176,0 166,169,174,178,1 171,173,198,203,1 169,181,198,209,0 122,127,182,193,0 112,126,129,143,1 124,129,144,146,1 116,126,129,133,0 103,116,128,139,0 95,117,121,126,1
106,120,153,179,1 144,151,181,186,1 174,181,189,191,1 163,176,189,203,0 170,176,183,184,1 153,184,195,199,1 158,161,194,199,0 156,161,184,204,1 158,160,183,186,0 157,160,189,196,1
178,189,200,203,1 198,199,220,240,1 209,218,220,251,0 189,219,229,238,1 219,228,236,244,1 233,235,237,249,1 226,234,237,248,0 226,235,252,264,1 246,256,264,276,1 249,264,279,288,1
263,267,279,286,0 263,267,269,279,1 266,269,298,310,1 290,298,327,336,1 320,327,383,399,1 367,383,396,408,1 381,383,397,400,0 384,387,393,402,1 365,385,389,402,0 378,385,407,418,1
371,393,407,410,0 387,394,408,414,1 395,406,408,413,0 388,392,408,415,0 347,349,393,397,0 310,318,348,362,0 280,283,318,330,0 266,283,286,288,1 264,274,285,296,0 262,274,283,293,1
250,257,283,296,0 223,256,258,280,1 247,252,257,282,0 238,248,252,262,0 226,234,248,252,0 217,223,235,242,0 216,223,232,236,1 178,203,232,249,0 186,203,205,229,1 198,205,206,209,1
189,200,206,209,0 190,199,202,206,1 169,173,201,210,0 165,173,187,194,1 184,187,219,228,1 206,219,267,286,1 269,282,284,288,1 269,281,304,310,1 261,283,304,306,0 256,285,290,296,1
286,289,341,347,1 328,332,341,348,0 322,332,345,350,1 335,344,345,360,1 330,335,346,349,0`.split(/\s+/).map(c => c.split(',').map(Number));

        const volumes = [38, 13, 12, 12, 52, 48, 9, 9, 5, 8, 12, 18, 16, 7, 9, 10, 31, 45, 13, 8, 6, 12, 36, 44, 32, 10, 12, 18, 41, 38, 6, 2, 2, 2, 38, 27, 27, 10, 6, 9,
            28, 37, 37, 8, 4, 6, 17, 38, 28, 12, 8, 5, 33, 38, 10, 8, 7, 9, 10, 15, 10, 2, 2, 2, 2, 2, 1, 2, 2, 4, 5, 4, 3, 3, 5, 10, 15, 12, 8, 5,
            10, 12, 12, 14, 10, 9, 8, 18, 10, 13, 7, 5, 3, 14, 17, 17, 17, 8, 12, 32, 30, 21, 11, 10, 18, 32, 47, 11, 8, 8, 8, 13, 12, 11, 8, 9, 7, 30, 54, 32,
            13, 9, 24, 20, 18, 30, 9, 3, 11, 31, 48, 30, 16, 17, 16, 36, 37, 36, 14, 18, 22, 43, 52, 33, 14, 12, 20, 42, 52, 35, 16, 14, 27, 47, 61, 35, 4, 8, 8, 32,
            13, 12, 5, 7, 8, 37, 49, 28, 10, 11, 11, 40, 51, 28, 15, 14, 20, 15, 15, 20, 15, 12, 24, 31, 50, 38, 9, 9, 12, 13, 11, 6, 7, 8];

        const prices = { '1.2925': 82, '1.2865': 116, '1.2805': 150, '1.2745': 184, '1.2685': 218, '1.2625': 252, '1.2565': 286, '1.2510': 318, '1.2450': 352, '1.2390': 386, '1.2330': 420, '1.2270': 454, '1.2210': 488, '1.2150': 522, '1.2095': 554 };
        const levels = [['100', 563], ['75', 577], ['50', 594], ['25', 612], ['0', 625], ['100', 636], ['75', 650], ['50', 667], ['25', 684], ['0', 697]];
        const dates = '12.10 12.12 12.15 12.16 12.18 12.19 12.22 12.24 12.25 12.26 12.30 12.31 1.2 1.6 1.7 1.8 1.12 1.13 1.14 1.16 1.19 1.20 1.22 1.23 1.27'.split(' ');

        document.getElementById('candles').innerHTML = candles.map(([high, top, bottom, low, falling], i) => {
            const x = 5 + i * 4;
            return `<path d="M${x + 0.5} ${high}V${low}"/><rect x="${x - 0.5}" y="${top + 0.5}" width="2" height="${Math.max(bottom - top, 1)}" fill="${falling ? '#408080' : '#fff'}"/>`;
        }).join('');

        document.getElementById('volumes').innerHTML = volumes.map((v, i) => `<rect x="${5 + i * 4}" y="${557 - v}" width="1" height="${v}"/>`).join('');

        let grid = '', labels = '';
        dates.forEach((d, i) => {
            const x = 5.5 + i * 32;
            if (i) grid += `<path d="M${x} 68V557M${x} 560V630M${x} 633V702"/>`;
            labels += `<path stroke="#408080" d="M${x} 702v4"/><text x="${4 + i * 32}" y="715">${d}</text>`;
        });
        for (const [p, y] of Object.entries(prices)) {
            grid += `<path d="M5 ${y + 0.5}H786"/>`;
            labels += `<path stroke="#408080" d="M786 ${y + 0.5}h3"/><text x="789" y="${y + 3}">${p}</text>`;
        }
        for (const [l, y] of levels) {
            if (l !== '100' && l !== '0') grid += `<path d="M5 ${y + 0.5}H786"/>`;
            labels += `<path stroke="#408080" d="M786 ${y + 0.5}h3"/><text x="790" y="${y + 3}">${l}</text>`;
        }
        document.getElementById('grid').innerHTML = grid;
        document.getElementById('labels').insertAdjacentHTML('beforeend', labels);

        const quotes = [
            ['USDCHF', '1.2562', '1.2567', 0], ['GBPUSD', '1.8118', '1.8123', 1], ['USDJPY', '106.14', '106.19', 0], ['EURUSD', '1.2477', '1.2482', 1],
            ['AUDUSD', '0.7699', '0.7704', 0], ['USDCAD', '1.3135', '1.3140', 0], ['EURGBP', '0.6884', '0.6889', 1], ['EURCHF', '1.5676', '1.5681', 0],
            ['EURJPY', '132.44', '132.49', 1], ['GBPJPY', '192.32', '192.42', 0], ['GBPCHF', '2.2762', '2.2772', 0]
        ];
        document.getElementById('quotes').innerHTML = quotes.map(([symbol, bid, ask, up]) => `
            <tr class="h-[17px] border-b border-[#c0c0ff] ${up ? 'text-[#0000ff]' : 'text-[#ff0000]'}">
                <td class="border-r border-[#c0c0ff] p-0"><div class="flex items-center gap-[6px] pl-[2px] text-black">
                    <svg class="h-[11px] w-[12px]" viewBox="0 0 12 11"><path fill="#a0a080" d="${up ? 'M7 1l6 6h-3v4H4V7z' : 'M4 1h6v4h3L7 11 2 6z'}"/><path fill="${up ? '#00f' : 'red'}" d="${up ? 'M6 0l6 5.500H9V10H3V5.500H0z' : 'M3 0h6v4.500h3L6 10 0 4.500h3z'}"/></svg>${symbol}</div></td>
                <td class="border-r border-[#c0c0ff] py-0 pr-[3px] pl-0 text-right">${bid}</td>
                <td class="py-0 pr-[6px] pl-0 text-right">${ask}</td>
            </tr>`).join('');

        document.getElementById('tree').innerHTML = ['Accounts', 'Indicators', 'Expert Advisors', 'Custom Indicators', 'User Functions'].map((name, i) => `
            <li class="flex h-4 items-center gap-1 pl-[4px]">
                <svg class="h-4 w-8" viewBox="0 0 32 16" shape-rendering="crispEdges"><path stroke="#606040" stroke-dasharray="1 1" d="M4.500 0V${i < 4 ? 16 : 8}M5 8.500h12"/>${i < 4 ? '<path fill="#fff" stroke="#606040" d="M.5 4.500h8v8h-8z"/><path stroke="#000" d="M2 8.500h5M4.500 6v5"/>' : ''}<use href="#folder" x="15" width="16" height="16"/></svg>${name}
            </li>`).join('');
    </script>
</body>

</html>
